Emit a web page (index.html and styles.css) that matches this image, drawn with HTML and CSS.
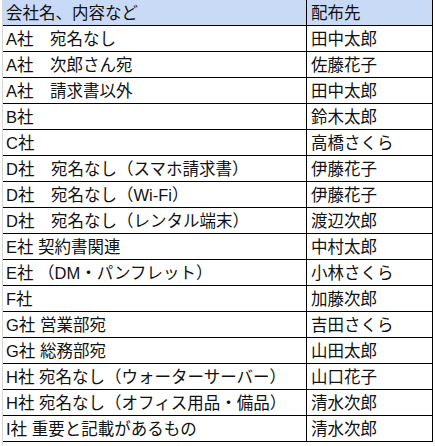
FILE: index.html
```html
<!DOCTYPE html>
<html lang="ja">
<head>
<meta charset="utf-8">
<title>配布先一覧</title>
<link rel="stylesheet" href="styles.css">
</head>
<body>
<div class="sheet">
  <div class="grid">
    <div class="cell head c1">会社名、内容など</div><div class="cell head c2">配布先</div>
    <div class="cell c1">A社　宛名なし</div><div class="cell c2">田中太郎</div>
    <div class="cell c1">A社　次郎さん宛</div><div class="cell c2">佐藤花子</div>
    <div class="cell c1">A社　請求書以外</div><div class="cell c2">田中太郎</div>
    <div class="cell c1">B社</div><div class="cell c2">鈴木太郎</div>
    <div class="cell c1">C社</div><div class="cell c2">高橋さくら</div>
    <div class="cell c1">D社　宛名なし（スマホ請求書）</div><div class="cell c2">伊藤花子</div>
    <div class="cell c1">D社　宛名なし（Wi-Fi）</div><div class="cell c2">伊藤花子</div>
    <div class="cell c1">D社　宛名なし（レンタル端末）</div><div class="cell c2">渡辺次郎</div>
    <div class="cell c1">E社 契約書関連</div><div class="cell c2">中村太郎</div>
    <div class="cell c1">E社 （DM・パンフレット）</div><div class="cell c2">小林さくら</div>
    <div class="cell c1">F社</div><div class="cell c2">加藤次郎</div>
    <div class="cell c1">G社 営業部宛</div><div class="cell c2">吉田さくら</div>
    <div class="cell c1">G社 総務部宛</div><div class="cell c2">山田太郎</div>
    <div class="cell c1">H社 宛名なし（ウォーターサーバー）</div><div class="cell c2">山口花子</div>
    <div class="cell c1">H社 宛名なし（オフィス用品・備品）</div><div class="cell c2">清水次郎</div>
    <div class="cell c1">I社 重要と記載があるもの</div><div class="cell c2">清水次郎</div>
  </div>
</div>
</body>
</html>
```
FILE: styles.css
```css
html, body {
  margin: 0;
  padding: 0;
  background: #ffffff;
}

.sheet {
  margin-left: 2px;
  border-left: 1px solid #d6d6d6;
  min-height: 446px;
  box-sizing: border-box;
  font-family: "Liberation Sans", "Noto Sans CJK JP", sans-serif;
  font-size: 16.5px;
  color: #111111;
}

.grid {
  display: grid;
  grid-template-columns: 304px 126px;
  grid-auto-rows: 26px;
}

.cell {
  box-sizing: border-box;
  border-bottom: 1px solid #000000;
  border-right: 1px solid #000000;
  line-height: 24px;
  padding-top: 1px;
  white-space: nowrap;
  overflow: hidden;
}

.c1 {
  padding-left: 3px;
}

.c2 {
  padding-left: 4px;
}

.head {
  background: #c9daf7;
}
```
